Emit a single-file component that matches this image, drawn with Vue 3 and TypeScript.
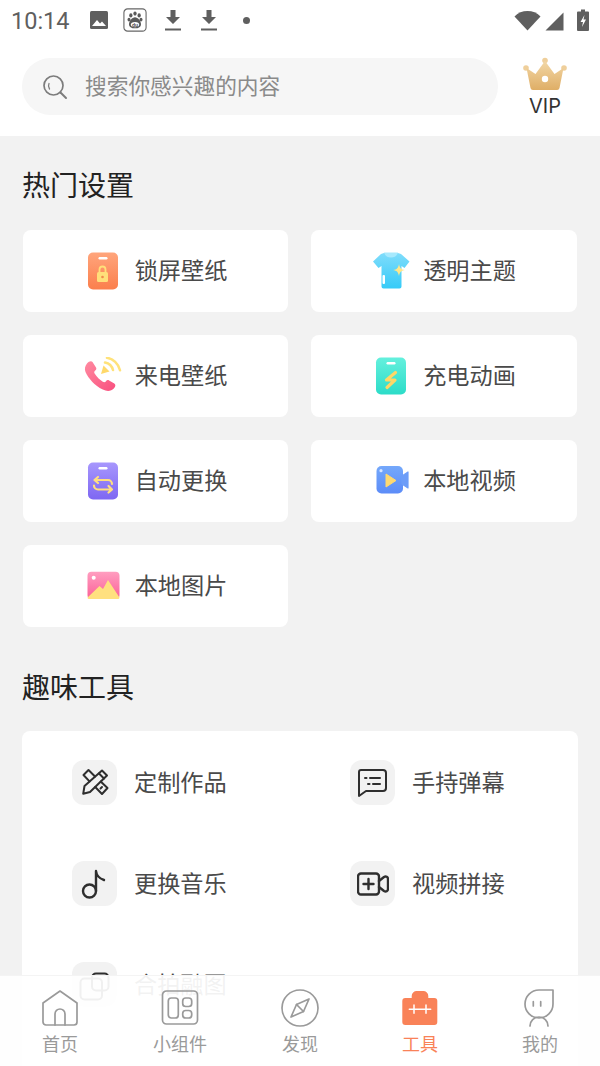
<script setup lang="ts">
const hotItems = [
  { name: '锁屏壁纸', icon: 'lock' },
  { name: '透明主题', icon: 'shirt' },
  { name: '来电壁纸', icon: 'call' },
  { name: '充电动画', icon: 'charge' },
  { name: '自动更换', icon: 'swap' },
  { name: '本地视频', icon: 'video' },
  { name: '本地图片', icon: 'image' },
]

const tools = [
  { name: '定制作品', icon: 'craft' },
  { name: '手持弹幕', icon: 'danmu' },
  { name: '更换音乐', icon: 'music' },
  { name: '视频拼接', icon: 'join' },
  { name: '合拍融图', icon: 'merge' },
]

const tabs = [
  { name: '首页', icon: 'home' },
  { name: '小组件', icon: 'widget' },
  { name: '发现', icon: 'compass' },
  { name: '工具', icon: 'toolbox', active: true },
  { name: '我的', icon: 'me' },
]
</script>

<template>
  <div class="page">
    <header class="top">
      <div class="status">
        <span class="status__time">10:14</span>
        <svg width="20" height="20" viewBox="0 0 20 20">
          <rect x="1" y="1" width="18" height="18" rx="1.5" fill="#5f5f5f" />
          <path d="M3 16l5-6 3 3.500 2-2 4 4.500z" fill="#fff" />
        </svg>
        <svg class="status__paw" width="24" height="24" viewBox="0 0 26 26">
          <rect x="1" y="1" width="24" height="24" rx="4" fill="#fff" stroke="#666" stroke-width="1.200" />
          <g fill="#5a5a5a">
            <ellipse cx="8.500" cy="8" rx="1.800" ry="2.300" />
            <ellipse cx="13" cy="6" rx="1.800" ry="2.300" />
            <ellipse cx="17.500" cy="8" rx="1.800" ry="2.300" />
            <ellipse cx="6.500" cy="12.500" rx="1.600" ry="2" />
            <ellipse cx="19.500" cy="12.500" rx="1.600" ry="2" />
            <path d="M13 10c3 0 6.500 4 6.500 7.500 0 3-2.500 4.500-6.500 4.500s-6.500-1.500-6.500-4.500C6.500 14 10 10 13 10z" />
          </g>
          <ellipse cx="13" cy="18" rx="4.500" ry="2.800" fill="#fff" />
          <text x="13" y="20.500" class="status__du">du</text>
        </svg>
        <svg class="status__dl" width="16" height="22" viewBox="0 0 16 22">
          <path d="M5.500 1h5v7h4.500l-7 7-7-7h4.500z" fill="#5f5f5f" />
          <rect x="0" y="19.500" width="16" height="2" fill="#5f5f5f" />
        </svg>
        <svg class="status__dl status__dl--second" width="16" height="22" viewBox="0 0 16 22">
          <path d="M5.500 1h5v7h4.500l-7 7-7-7h4.500z" fill="#5f5f5f" />
          <rect x="0" y="19.500" width="16" height="2" fill="#5f5f5f" />
        </svg>
        <span class="status__dot"></span>
        <span class="status__spacer"></span>
        <svg width="27" height="21" viewBox="0 0 27 21">
          <path d="M13.500 20.500L0.500 6.500C4 2.800 8.500 1 13.500 1s9.500 1.800 13 5.500z" fill="#5f5f5f" />
        </svg>
        <svg class="status__signal" width="19" height="19" viewBox="0 0 19 19">
          <path d="M18.500 0.500v18H0.500z" fill="#5f5f5f" />
        </svg>
        <svg class="status__batt" width="12" height="22" viewBox="0 0 12 22">
          <path d="M4 0.500h4v2h3a1 1 0 0 1 1 1V21a1 1 0 0 1-1 1H1a1 1 0 0 1-1-1V3.500a1 1 0 0 1 1-1h3z" fill="#5f5f5f" />
          <path d="M7.500 6L3.500 13h2.500l-1 5 4-7.500H6.500z" fill="#fff" />
        </svg>
      </div>
      <div class="searchrow">
        <div class="search">
          <svg width="26" height="26" viewBox="0 0 26 26" fill="none" stroke="#7c7c7c" stroke-width="1.700" stroke-linecap="round">
            <circle cx="11.500" cy="11.500" r="9.500" />
            <path d="M18.500 18.500l5.500 5.500" stroke-width="2" />
            <path d="M7 9.500a5.500 5.500 0 0 0 .5 5.500" stroke-width="1.300" />
          </svg>
          <span class="search__text">搜索你感兴趣的内容</span>
        </div>
        <div class="vip">
          <svg width="44" height="34" viewBox="0 0 44 34">
            <defs>
              <linearGradient id="crown" x1="0" y1="0" x2="0" y2="1">
                <stop offset="0" stop-color="#f2d7a6" />
                <stop offset="1" stop-color="#dfae66" />
              </linearGradient>
            </defs>
            <circle cx="22" cy="3.500" r="2.800" fill="#efcf9b" />
            <circle cx="3" cy="11" r="2.800" fill="#efcf9b" />
            <circle cx="41" cy="11" r="2.800" fill="#efcf9b" />
            <path d="M22 4L31.500 17 40.500 11 36.500 31a2.500 2.500 0 0 1-2.500 2H10a2.500 2.500 0 0 1-2.500-2L3.500 11 12.500 17z" fill="url(#crown)" />
            <circle cx="22" cy="22" r="3.200" fill="#fff" />
          </svg>
          <span class="vip__label">VIP</span>
        </div>
      </div>
    </header>

    <main class="content">
      <h2 class="title">热门设置</h2>
      <div class="hot">
        <div v-for="item in hotItems" :key="item.name" class="hot__card">
          <svg width="38" height="38" viewBox="0 0 38 38">
            <defs>
              <linearGradient id="g-orange" x1="0" y1="0" x2="0" y2="1"><stop offset="0" stop-color="#ffa57c" /><stop offset="1" stop-color="#fb7f4c" /></linearGradient>
              <linearGradient id="g-sky" x1="0" y1="0" x2="0" y2="1"><stop offset="0" stop-color="#7fdcfb" /><stop offset="1" stop-color="#36cbf8" /></linearGradient>
              <linearGradient id="g-teal" x1="0" y1="0" x2="0" y2="1"><stop offset="0" stop-color="#64f0dd" /><stop offset="1" stop-color="#2cdcc8" /></linearGradient>
              <linearGradient id="g-purple" x1="0" y1="0" x2="0" y2="1"><stop offset="0" stop-color="#a797fd" /><stop offset="1" stop-color="#7e67f2" /></linearGradient>
              <linearGradient id="g-pink" x1="0" y1="0" x2="0" y2="1"><stop offset="0" stop-color="#ff9ec0" /><stop offset="1" stop-color="#fb5f96" /></linearGradient>
              <linearGradient id="g-blue" x1="0" y1="0" x2="0" y2="1"><stop offset="0" stop-color="#74a8fb" /><stop offset="1" stop-color="#5c8cf8" /></linearGradient>
              <linearGradient id="g-call" x1="0" y1="0" x2="1" y2="1"><stop offset="0" stop-color="#ff8aa0" /><stop offset="1" stop-color="#f9507f" /></linearGradient>
            </defs>
            <template v-if="item.icon === 'lock'">
              <rect x="4" y="0.500" width="30" height="37" rx="5" fill="url(#g-orange)" />
              <rect x="14.500" y="5" width="9" height="2.500" rx="1.200" fill="#fff" />
              <rect x="13" y="20" width="11" height="10" rx="1.500" fill="#ffdf7a" />
              <path d="M15.500 20v-2.500a3 3 0 0 1 6 0V20" fill="none" stroke="#ffdf7a" stroke-width="1.800" />
              <circle cx="18.500" cy="25" r="1.300" fill="#f08a4d" />
            </template>
            <template v-else-if="item.icon === 'shirt'">
              <path d="M12 1h14l3 1 8.500 7.500-5 6.500-3-2v20.500a2 2 0 0 1-2 2H11.500a2 2 0 0 1-2-2V14l-3 2-5.500-6.500L9 2z" fill="url(#g-sky)" />
              <path d="M12 0.500c1 3.500 3.500 5 7 5s6-1.500 7-5z" fill="#a7e9fd" />
              <rect x="10.500" y="23" width="2.500" height="9" rx="1" fill="#fff" />
              <path d="M27 12c.8 4 2 5.500 6 6-4 .6-5.200 2-6 6-.8-4-2-5.400-6-6 4-.5 5.200-2 6-6z" fill="#ffe68a" />
            </template>
            <template v-else-if="item.icon === 'call'">
              <path d="M3 6.500c2-2.500 4.500-3 5.500-1.500l3.500 5.500c.7 1.200.3 2.200-1 3.200-1 .8-1 1.800-.2 3 2 3.200 4.800 6 8 8 1.200.7 2.200.7 3-.3 1-1.300 2-1.700 3.300-1l5.200 3.200c1.500 1 1.500 3-.5 5-2.500 2.500-6.500 3.200-11 1C10.500 28.500 4.500 21.500 1.500 15 .3 12 1 9 3 6.500z" fill="url(#g-call)" />
              <path d="M17 17l2.500-8.500 6 6z" fill="#ffd96a" />
              <path d="M21 5.500c4 .8 7 3.500 8 7.500M23 .8c6 1 11.500 5.500 13 12.500" fill="none" stroke="#ffe27a" stroke-width="2.500" stroke-linecap="round" />
            </template>
            <template v-else-if="item.icon === 'charge'">
              <rect x="4" y="0.500" width="30" height="37" rx="5" fill="url(#g-teal)" />
              <rect x="14.500" y="5" width="9" height="2.500" rx="1.200" fill="#fff" />
              <path d="M23.500 15.500L14.500 23h8.500L15 30.500" fill="none" stroke="#ffd766" stroke-width="3.200" stroke-linecap="round" stroke-linejoin="round" />
            </template>
            <template v-else-if="item.icon === 'swap'">
              <rect x="4" y="0.500" width="30" height="37" rx="5" fill="url(#g-purple)" />
              <rect x="14.500" y="5" width="9" height="2.500" rx="1.200" fill="#fff" />
              <path d="M14 15l-3.500 3 3.500 3M10.500 18H24a4 4 0 0 1 4 4M24.500 24l3.500 3.500-3.500 3M27.500 27.500H14a4 4 0 0 1-4-4" fill="none" stroke="#ffdf7f" stroke-width="2.200" stroke-linecap="round" stroke-linejoin="round" />
            </template>
            <template v-else-if="item.icon === 'video'">
              <rect x="4.500" y="4" width="26.500" height="27.500" rx="5" fill="url(#g-blue)" />
              <path d="M30 14l6-4v16l-6-4z" fill="#6d9df8" stroke="#6d9df8" stroke-width="1.200" stroke-linejoin="round" />
              <circle cx="9" cy="8.700" r="1.600" fill="#d6e5ff" />
              <path d="M14 12l10 6.500-10 6.500z" fill="#ffd970" stroke="#ffd970" stroke-linejoin="round" />
            </template>
            <template v-else>
              <rect x="3.500" y="4.700" width="32" height="27.300" rx="4" fill="url(#g-pink)" />
              <circle cx="9.700" cy="10.700" r="2" fill="#fff" />
              <path d="M3.500 30.500L15.500 19l3.500 3 5-9 11.500 17.500a1.500 1.500 0 0 1-1.500 1.500H5a1.500 1.500 0 0 1-1.500-1.500z" fill="#ffe07f" />
            </template>
          </svg>
          <span class="hot__name">{{ item.name }}</span>
        </div>
      </div>

      <h2 class="title title--second">趣味工具</h2>
      <div class="tools">
        <div v-for="tool in tools" :key="tool.name" class="tool">
          <span class="tool__icon">
            <svg width="32" height="32" viewBox="0 0 32 32" fill="none" stroke="#2e2e2e" stroke-width="2" stroke-linecap="round" stroke-linejoin="round">
              <template v-if="tool.icon === 'craft'">
                <path d="M4.200 26.800L5.500 19 23 3.500 28 8.500 11 25z" />
                <path d="M20 6.500l5 5" />
                <path d="M10.500 14.400L4.500 8l5-5 6.500 6.500" />
                <path d="M16.200 20l6.800 7 5.500-6-6.800-6.400" />
                <path d="M21.500 21.500l1.500-1.500" />
              </template>
              <template v-else-if="tool.icon === 'danmu'">
                <path d="M5 4h22a3 3 0 0 1 3 3v15a3 3 0 0 1-3 3H10l-7 5V6a2 2 0 0 1 2-2z" transform="translate(-1 -1)" />
                <path d="M8 11h1.500M13 11h10M11 17h1.500M16 17h7" />
              </template>
              <template v-else-if="tool.icon === 'music'">
                <circle cx="10.500" cy="23" r="6.500" stroke-width="2.400" />
                <path d="M17 23V3c.5 5 3.500 7.500 8 9" stroke-width="2.400" />
              </template>
              <template v-else-if="tool.icon === 'join'">
                <rect x="1" y="5.500" width="21" height="21" rx="3" stroke-width="2.400" />
                <path d="M6.500 16h10M11.500 11v10" stroke-width="2.400" />
                <path d="M22 13l5-4c2-1.200 4 0 4 2v10c0 2-2 3.200-4 2l-5-4" stroke-width="2.400" />
              </template>
              <template v-else>
                <rect x="13" y="4.500" width="16.500" height="17" rx="4" />
                <rect x="1.500" y="9.500" width="21.500" height="21" rx="4" />
              </template>
            </svg>
          </span>
          <span class="tool__name">{{ tool.name }}</span>
        </div>
      </div>
    </main>

    <nav class="tabs">
      <div v-for="tab in tabs" :key="tab.name" class="tab" :class="{ 'tab--active': tab.active }">
        <svg width="38" height="38" viewBox="0 0 38 38" fill="none" stroke="#9a9a9a" stroke-width="1.700" stroke-linecap="round" stroke-linejoin="round">
          <template v-if="tab.icon === 'home'">
            <path d="M2 14L19 2l17 12v19a3 3 0 0 1-3 3H5a3 3 0 0 1-3-3z" />
            <path d="M14 36V25a5 5 0 0 1 10 0v11" />
          </template>
          <template v-else-if="tab.icon === 'widget'">
            <rect x="1.500" y="2" width="35" height="33" rx="4" />
            <rect x="7.300" y="9" width="10" height="20" rx="3" />
            <rect x="21.700" y="9" width="9" height="8.500" rx="3" />
            <rect x="21.700" y="21.500" width="9" height="7.500" rx="3" />
          </template>
          <template v-else-if="tab.icon === 'compass'">
            <circle cx="19" cy="19" r="18" />
            <path d="M28 10l-5.500 12.500L10 28l5.500-12.500z" />
            <path d="M15.500 15.500l7 7" />
          </template>
          <template v-else-if="tab.icon === 'toolbox'">
            <path d="M10.700 9V7a5 5 0 0 1 5-5h6.600a5 5 0 0 1 5 5v2h6a3 3 0 0 1 3 3v21a3 3 0 0 1-3 3H4.300a3 3 0 0 1-3-3V12a3 3 0 0 1 3-3z" fill="#f98258" stroke="none" />
            <path d="M8.300 20.300h21.400M13 16v8.300M25 16v8.300" stroke="#fff" stroke-width="1.500" />
          </template>
          <template v-else>
            <path d="M32 1v14A14 14 0 1 1 18 1z" />
            <path d="M12.300 12.700V17M19.700 12.700V17" />
            <path d="M9 37a9 9 0 0 1 18 0" />
          </template>
        </svg>
        <span class="tab__name">{{ tab.name }}</span>
      </div>
    </nav>
  </div>
</template>

<style scoped>
.page {
  position: relative;
  display: flex;
  flex-direction: column;
  width: 600px;
  height: 1066px;
  overflow: hidden;
  background: #f2f2f2;
  font-family: "Noto Sans CJK SC", "Noto Sans", sans-serif;
}

.top {
  flex-shrink: 0;
  height: 136px;
  background: #fff;
}

.status {
  display: flex;
  align-items: center;
  height: 40px;
  padding: 0 11px;
}

.status__time {
  margin-right: 19px;
  padding-top: 2px;
  font: 400 23.500px Roboto, sans-serif;
  color: #5f5f5f;
}

.status__paw {
  margin-left: 14px;
}

.status__dl {
  margin-left: 18px;
}

.status__dl--second {
  margin-left: 20px;
}

.status__du {
  font: 700 6px Roboto, sans-serif;
  fill: #5a5a5a;
  text-anchor: middle;
}

.status__dot {
  width: 7px;
  height: 7px;
  margin-left: 26px;
  border-radius: 50%;
  background: #5f5f5f;
}

.status__spacer {
  flex: 1;
}

.status__signal {
  margin-left: 4px;
  margin-top: 2px;
}

.status__batt {
  margin-left: 13px;
}

.searchrow {
  display: flex;
  align-items: flex-start;
  margin-top: 18px;
  padding-left: 22px;
}

.search {
  display: flex;
  align-items: center;
  gap: 17px;
  width: 476px;
  height: 57px;
  padding-left: 20px;
  box-sizing: border-box;
  border-radius: 29px;
  background: #f6f6f6;
}

.search__text {
  padding-bottom: 4px;
  font-size: 21.700px;
  color: #8a8a8a;
}

.vip {
  display: flex;
  flex-direction: column;
  align-items: center;
  width: 46px;
  margin-left: 24px;
  margin-top: -1px;
}

.vip__label {
  margin-top: 3px;
  font: 400 20px/24px Inter, sans-serif;
  color: #333;
}

.content {
  flex: 1;
  min-height: 0;
  padding: 0 22px;
}

.title {
  margin: 27px 0 0;
  font-size: 28px;
  font-weight: 400;
  line-height: 42px;
  color: #222;
}

.title--second {
  margin-top: 38px;
}

.hot {
  display: grid;
  grid-template-columns: 265px 266px;
  gap: 23px;
  margin-top: 25px;
  padding-left: 1px;
}

.hot__card {
  display: flex;
  align-items: center;
  justify-content: center;
  gap: 13px;
  height: 82px;
  border-radius: 8px;
  background: #fff;
}

.hot__name {
  padding-bottom: 4px;
  font-size: 23.200px;
  color: #4a4a4a;
}

.tools {
  display: grid;
  grid-template-columns: 278px 278px;
  row-gap: 56px;
  margin-top: 24px;
  padding-top: 29px;
  height: 400px;
  box-sizing: border-box;
  align-content: start;
  border-radius: 8px;
  background: #fff;
}

.tool {
  display: flex;
  align-items: center;
  gap: 17px;
  padding-left: 50px;
}

.tool__icon {
  display: flex;
  align-items: center;
  justify-content: center;
  width: 45px;
  height: 45px;
  border-radius: 12px;
  background: #f2f2f2;
}

.tool__name {
  padding-bottom: 4px;
  font-size: 23.200px;
  color: #4a4a4a;
}

.tabs {
  position: absolute;
  left: 0;
  right: 0;
  bottom: 0;
  display: grid;
  grid-template-columns: repeat(5, 120px);
  height: 91px;
  padding-top: 13px;
  box-sizing: border-box;
  border-top: 1px solid #f4f4f4;
  background: rgba(255, 255, 255, 0.93);
}

.tab {
  display: flex;
  flex-direction: column;
  align-items: center;
  gap: 3px;
}

.tab__name {
  font-size: 18px;
  line-height: 26px;
  color: #9a9a9a;
}

.tab--active .tab__name {
  color: #f98258;
}
</style>
